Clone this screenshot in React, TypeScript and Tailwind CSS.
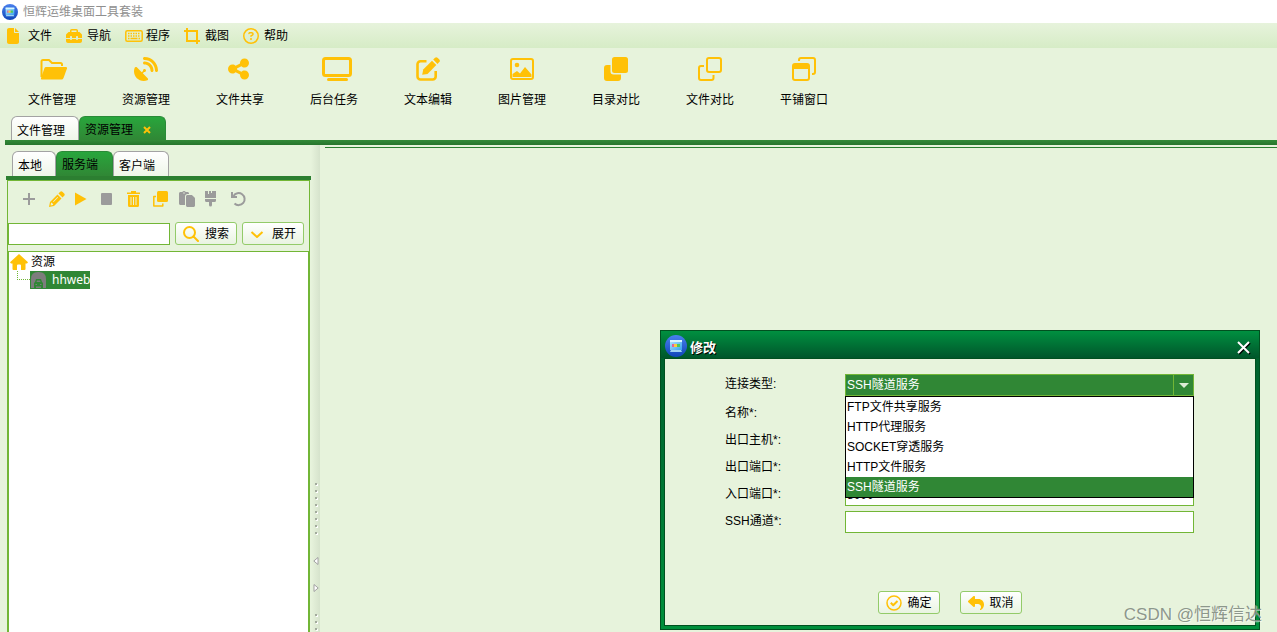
import { useState } from "react";
import type { ReactNode } from "react";
import clsx from "clsx";
import {
	FaFile,
	FaPaste,
	FaPlay,
	FaRegCircleQuestion,
	FaReply,
	FaSatelliteDish,
	FaShareNodes,
	FaToolbox,
} from "react-icons/fa6";

function Logo({ size }: { size: number }) {
	return (
		<svg width={size} height={size} viewBox="0 0 22 22" className="shrink-0">
			<defs>
				<linearGradient id="logo-bg" x1="0" y1="0" x2="0" y2="1">
					<stop offset="0" stopColor="#4a80ee" />
					<stop offset="1" stopColor="#0f45b8" />
				</linearGradient>
				<linearGradient id="logo-screen" x1="0" y1="0" x2="1" y2="1">
					<stop offset="0" stopColor="#b5e8ff" />
					<stop offset="1" stopColor="#3aa2ee" />
				</linearGradient>
			</defs>
			<circle cx="11" cy="11" r="11" fill="url(#logo-bg)" />
			<rect x="5" y="5" width="12" height="10" fill="url(#logo-screen)" />
			<path d="M5 5h12v2H5z" fill="#d8f5ff" />
			<path d="M6 15h10l1 2H5z" fill="#9ed3f5" />
			<path d="M7 9h2v3H7z" fill="#e0649c" />
			<path d="M9 9h3v3H9z" fill="#ffc93c" />
			<path d="M12 9h3v3h-3z" fill="#4fc95a" />
		</svg>
	);
}

function Icon({ w = 24, h = 24, children }: { w?: number; h?: number; children: ReactNode }) {
	return (
		<svg
			width={w}
			height={h}
			viewBox={`0 0 ${w} ${h}`}
			fill="currentColor"
			className="shrink-0"
			aria-hidden="true"
		>
			{children}
		</svg>
	);
}

const line = {
	fill: "none",
	stroke: "currentColor",
	strokeWidth: 2,
	strokeLinejoin: "round",
} as const;

const CropIcon = () => (
	<Icon w={16} h={16}>
		<path {...line} strokeLinejoin="miter" d="M3 0v13h13M0 3h13v13" />
	</Icon>
);

const KeyboardIcon = () => (
	<Icon w={18} h={12}>
		<rect {...line} strokeWidth={1.5} x="0.8" y="0.8" width="16.4" height="10.4" rx="1.5" />
		<path {...line} strokeWidth={1.5} strokeDasharray="1.5 1" d="M3 3.5h12M3 6h12" />
		<path {...line} strokeWidth={1.5} d="M3 8.5h1.5M5.500 8.500h7M13.500 8.500H15" />
	</Icon>
);

const FolderIcon = () => (
	<Icon w={28}>
		<path {...line} d="M1.5 20V4.5Q1.5 3 3 3h6l3 3h8.5Q22 6 22 7.5V9" />
		<path d="M6 10h20q1.500 0 1 1.500l-3.500 9.500q-.6 1.500-2 1.500H2q-1.500 0-1-1.500L4.500 11q.4-1 1.500-1z" />
	</Icon>
);

const DesktopIcon = () => (
	<Icon w={30}>
		<rect {...line} strokeWidth={3} x="1.5" y="1.5" width="27" height="17" rx="2" />
		<rect x="5" y="21" width="21" height="3" rx="1.5" />
	</Icon>
);

const EditIcon = () => (
	<Icon>
		<path {...line} strokeWidth={2.6} d="M10.5 4.3h-6a3 3 0 0 0-3 3v12.2a3 3 0 0 0 3 3h12.200a3 3 0 0 0 3-3V14" />
		<path d="M6.2 17.800l1-5.300L16 3.800l4.300 4.300-8.800 8.800z" />
		<path d="M17.2 2.600L19 .8a1.800 1.800 0 0 1 2.500 0l1.800 1.800a1.800 1.800 0 0 1 0 2.500l-1.800 1.800z" />
	</Icon>
);

const ImageIcon = () => (
	<Icon>
		<rect {...line} x="1" y="2" width="22" height="20" rx="2" />
		<circle cx="7" cy="8" r="2.3" />
		<path d="M2.5 20v-3L7 14l3 2.500L15 10l6.500 7.500V20z" />
	</Icon>
);

const CopyIcon = () => (
	<Icon>
		<rect x="8" y="0" width="16" height="16" rx="2.5" />
		<path d="M0 11a3 3 0 0 1 3-3h3.500v6.500a3 3 0 0 0 3 3H17V21a3 3 0 0 1-3 3H3a3 3 0 0 1-3-3z" />
	</Icon>
);

const CompareIcon = () => (
	<Icon>
		<rect {...line} x="9" y="1" width="14" height="14" rx="2" />
		<path {...line} d="M6 9H3q-2 0-2 2v10q0 2 2 2h10.500q2 0 2-2v-3" />
	</Icon>
);

const WindowsIcon = () => (
	<Icon>
		<rect {...line} x="1" y="7" width="16" height="16" rx="2" />
		<path d="M1 7h16v5H1z" />
		<path {...line} d="M7 4V3q0-2 2-2h12q2 0 2 2v12q0 2-2 2h-1" />
	</Icon>
);

const menus = [
	{ label: "文件", icon: <FaFile size={16} className="-ml-0.5" /> },
	{ label: "导航", icon: <FaToolbox size={16} /> },
	{ label: "程序", icon: <KeyboardIcon /> },
	{ label: "截图", icon: <CropIcon /> },
	{ label: "帮助", icon: <FaRegCircleQuestion size={16} /> },
];

const tools = [
	{ label: "文件管理", icon: <FolderIcon /> },
	{ label: "资源管理", icon: <FaSatelliteDish size={24} /> },
	{ label: "文件共享", icon: <FaShareNodes className="h-6 w-[21px]" /> },
	{ label: "后台任务", icon: <DesktopIcon /> },
	{ label: "文本编辑", icon: <EditIcon /> },
	{ label: "图片管理", icon: <ImageIcon /> },
	{ label: "目录对比", icon: <CopyIcon /> },
	{ label: "文件对比", icon: <CompareIcon /> },
	{ label: "平铺窗口", icon: <WindowsIcon /> },
];

const actions = [
	{
		label: "新增",
		on: false,
		icon: (
			<Icon w={13} h={16}>
				<path d="M5 2h2v5h5v2H7v5H5V9H0V7h5z" />
			</Icon>
		),
	},
	{
		label: "编辑",
		on: true,
		icon: (
			<Icon w={16} h={16}>
				<path
					fillRule="evenodd"
					d="M0 16l1-5 7.500-7.500 4 4L5 15zM2 12l-.4 2.400L4 14l.2-1.300-1-.2-.2-1zM9.500 2.500L11.200.8q1-1 2.200 0l1.800 1.800q1 1 0 2.200L13.500 6.500zM4 10.500l.6.6 4.500-4.500-.6-.6z"
				/>
			</Icon>
		),
	},
	{
		label: "启动",
		on: true,
		icon: (
			<Icon w={12} h={16}>
				<path d="M0 1.500L11.500 8 0 14.500z" />
			</Icon>
		),
	},
	{
		label: "停止",
		on: false,
		icon: (
			<Icon w={12} h={16}>
				<rect y="2" width="11" height="12" rx="1" />
			</Icon>
		),
	},
	{
		label: "删除",
		on: true,
		icon: (
			<Icon w={14} h={16}>
				<path d="M4 0h5v1.500h4V3H0V1.500h4z" />
				<path fillRule="evenodd" d="M1 4h11v10.500q0 1.500-1.500 1.500h-8Q1 16 1 14.500zM3.500 6v8h1V6zM6 6v8h1V6zM8.500 6v8h1V6z" />
			</Icon>
		),
	},
	{
		label: "复制",
		on: true,
		icon: (
			<Icon w={15} h={16}>
				<rect x="4" y="0" width="11" height="11" rx="1.5" />
				<path {...line} strokeWidth={1.5} d="M3 5.500H.8v9.500h9v-2.500" />
			</Icon>
		),
	},
	{ label: "粘贴", on: false, icon: <FaPaste size={16} /> },
	{
		label: "清理",
		on: false,
		icon: (
			<Icon w={11} h={16}>
				<path d="M0 0h3v3h1V0h2v2h1V0h4v7H0zM0 8h11v1.500q0 1.500-1.500 1.500H7v3q0 1.500-1.500 1.500T4 14v-3H1.500Q0 11 0 9.500z" />
			</Icon>
		),
	},
	{
		label: "还原",
		on: false,
		icon: (
			<Icon w={15} h={16}>
				<path {...line} d="M2.500 5A6 6 0 1 1 3.500 12.500" />
				<path {...line} strokeLinejoin="miter" d="M1 1v5h5" />
			</Icon>
		),
	},
];

const services = [
	"FTP文件共享服务",
	"HTTP代理服务",
	"SOCKET穿透服务",
	"HTTP文件服务",
	"SSH隧道服务",
];

const fields = [
	{ id: "name", label: "名称*:", value: "" },
	{ id: "out-host", label: "出口主机*:", value: "" },
	{ id: "out-port", label: "出口端口*:", value: "" },
	{ id: "in-port", label: "入口端口*:", value: "8000" },
	{ id: "ssh-channel", label: "SSH通道*:", value: "" },
];

function Tab({ active, children }: { active?: boolean; children: ReactNode }) {
	return (
		<button
			type="button"
			role="tab"
			aria-selected={!!active}
			className={clsx(
				"flex items-center rounded-t-md border border-b-0 pl-[5px]",
				active
					? "border-[#2a8a38] bg-linear-to-b from-[#27a63c] to-[#308735] pt-0.5"
					: "border-[#a3a3a3] bg-linear-to-b from-white to-[#eef6e8] pt-1",
			)}
		>
			{children}
		</button>
	);
}

function PushButton({ icon, children }: { icon: ReactNode; children: ReactNode }) {
	return (
		<button
			type="button"
			className="flex h-[23px] w-[62px] shrink-0 items-center rounded-[3px] border border-[#93cb69] bg-linear-to-b from-white to-[#e9f4e1] pt-px pl-[7px]"
		>
			<span className="flex w-[22px] text-[#ffc107]">{icon}</span>
			{children}
		</button>
	);
}

function SidePanel() {
	return (
		<aside className="flex w-[306px] shrink-0 flex-col pt-1.5 pl-px">
			<div role="tablist" className="flex h-[25px] pl-1.5">
				<Tab>
					<span className="w-[37px] text-left">本地</span>
				</Tab>
				<Tab active>
					<span className="w-[50px] text-left">服务端</span>
				</Tab>
				<Tab>
					<span className="w-[49px] text-left">客户端</span>
				</Tab>
			</div>
			<div className="h-1 shrink-0 bg-[#2c7f31]" />
			<div className="mr-px ml-px flex flex-1 flex-col border border-b-0 border-[#72b636]">
				<div className="flex h-[38px] shrink-0 items-center pb-0.5 pl-[15px]">
					{actions.map((action) => (
						<button
							key={action.label}
							type="button"
							aria-label={action.label}
							className={clsx("flex w-[26px]", action.on ? "text-[#ffc107]" : "text-[#9b9b9b]")}
						>
							{action.icon}
						</button>
					))}
				</div>
				<div className="flex h-8 shrink-0 items-start gap-[5px] pt-[3px] pr-[5px]">
					<input
						aria-label="搜索资源"
						className="mt-px h-[22px] min-w-0 flex-1 border border-[#72b636] bg-white px-1"
					/>
					<PushButton
						icon={
							<Icon w={16} h={16}>
								<circle {...line} cx="6.5" cy="6.5" r="5.5" />
								<path {...line} strokeLinecap="round" d="M10.500 10.500L15 15" />
							</Icon>
						}
					>
						搜索
					</PushButton>
					<PushButton
						icon={
							<Icon w={14} h={16}>
								<path {...line} d="M1.500 6L7 11l5.500-5" />
							</Icon>
						}
					>
						展开
					</PushButton>
				</div>
				<ul role="tree" className="flex-1 border border-b-0 border-[#72b636] bg-white pt-px">
					<li role="treeitem" aria-expanded="true">
						<div className="flex h-[18px] items-center gap-[3px] pl-px">
							<Icon w={18} h={16}>
								<path
									fill="#ffc107"
									d="M9 0l9 8.300-1 1.200h-1.500V15q0 1-1 1H11v-4.500q0-1-1-1H8q-1 0-1 1V16H3.500q-1 0-1-1V9.500H1L0 8.300z"
								/>
							</Icon>
							资源
						</div>
						<ul role="group" className="pl-2">
							<li role="treeitem" className="flex h-[18px]">
								<span className="mb-[9px] w-[13px] border-b border-l border-dotted border-[#72b636]" />
								<span className="flex items-center gap-1 bg-[#308735] font-['Noto_Sans',sans-serif] text-white">
									<Icon w={18} h={18}>
										<path fill="#7d7d7d" d="M1 17V8q0-7 7-7h1q7 0 7 7v9z" />
										<path
											fill="#308735"
											fillRule="evenodd"
											d="M4 17v-5l1-1 1-3h5l1 3 1 1v5h-2v-1.500H6V17zM6.500 11h4l-.5-1.500H7zM5.500 13v1H7v-1zM10 13v1h1.500v-1z"
										/>
									</Icon>
									hhweb
								</span>
							</li>
						</ul>
					</li>
				</ul>
			</div>
		</aside>
	);
}

function Dots() {
	return (
		<>
			{Array.from({ length: 8 }, (_, i) => (
				<span key={i} className="mb-[5px] size-0.5 shrink-0 bg-[#a3ab9d] shadow-[1px_1px_0_#fff]" />
			))}
		</>
	);
}

function Splitter() {
	return (
		<div className="flex w-[9px] shrink-0 flex-col items-center overflow-hidden bg-linear-to-r from-[#e7f3dc] to-[#d6e3cc] pt-[338px]">
			<Dots />
			<div className="flex shrink-0 flex-col gap-[19px] pt-[18px] pb-[22px]">
				<Icon w={6} h={8}>
					<path d="M5 .5v7L.8 4z" fill="#fff" stroke="#a0a0a0" />
				</Icon>
				<Icon w={6} h={8}>
					<path d="M1 .5v7L5.200 4z" fill="#fff" stroke="#a0a0a0" />
				</Icon>
			</div>
			<Dots />
		</div>
	);
}

function EditDialog() {
	const [service, setService] = useState(services[4]);

	return (
		<div
			role="dialog"
			aria-labelledby="dialog-title"
			className="absolute top-[330px] left-[660px] flex h-[300px] w-[600px] flex-col border border-[#00501f] bg-linear-to-b from-[#005c2c] to-[#008f3c] px-[3px] pb-[3px]"
		>
			<div className="-mx-[3px] flex h-[27px] shrink-0 items-center bg-linear-to-b from-[#009040] to-[#00562b] pt-0.5 pr-2 pl-1 text-white">
				<Logo size={22} />
				<h2
					id="dialog-title"
					className="flex-1 pt-1 pl-[3px] text-[13px] font-bold [text-shadow:1px_1px_0_#000]"
				>
					修改
				</h2>
				<button type="button" aria-label="关闭" className="pt-1">
					<Icon w={15} h={15}>
						<path stroke="#000" strokeWidth="2" d="M3 3l11 11M14 3L3 14" />
						<path stroke="#fff" strokeWidth="2" d="M2 2l11 11M13 2L2 13" />
					</Icon>
				</button>
			</div>
			<form className="flex flex-1 flex-col border border-[#00501f] bg-[#e7f3dc] pt-[15px] pr-[61px] pl-[60px]">
				<div className="flex pb-[7px]">
					<label htmlFor="service" className="w-[120px] leading-5">
						连接类型:
					</label>
					<div className="relative flex-1">
						<select
							id="service"
							value={service}
							onChange={(e) => setService(e.target.value)}
							className="block h-[22px] w-full appearance-none border border-[#72b636] bg-[#308735] pl-px text-white"
						>
							{services.map((name) => (
								<option key={name}>{name}</option>
							))}
						</select>
						<span className="pointer-events-none absolute inset-y-0 right-0 flex w-[21px] items-center justify-center border border-[#72b636] text-[#dcecd4]">
							<Icon w={10} h={5}>
								<path d="M0 0h10L5 5z" />
							</Icon>
						</span>
						<ul role="listbox" className="absolute top-full right-0 left-0 z-10 border border-black bg-white">
							{services.map((name) => (
								<li
									key={name}
									role="option"
									aria-selected={name === service}
									onClick={() => setService(name)}
									className={clsx("h-5 pl-px leading-5", name === service && "bg-[#308735] text-white")}
								>
									{name}
								</li>
							))}
						</ul>
					</div>
				</div>
				<div className="flex flex-col gap-[5px]">
					{fields.map((field) => (
						<div key={field.id} className="flex">
							<label htmlFor={field.id} className="w-[120px] leading-5">
								{field.label}
							</label>
							<input
								id={field.id}
								defaultValue={field.value}
								className="h-[22px] min-w-0 flex-1 border border-[#72b636] bg-white pl-px"
							/>
						</div>
					))}
				</div>
				<div className="mt-auto flex justify-center gap-5 pr-5 pb-[11px]">
					<PushButton
						icon={
							<Icon w={16} h={16}>
								<circle {...line} strokeWidth={1.5} cx="8" cy="8" r="7" />
								<path {...line} d="M4.800 7.800l2.400 2.400 4.300-4.200" />
							</Icon>
						}
					>
						确定
					</PushButton>
					<PushButton icon={<FaReply size={16} />}>取消</PushButton>
				</div>
			</form>
		</div>
	);
}

export default function App() {
	return (
		<div className="relative flex h-screen flex-col overflow-hidden bg-[#e7f3dc] font-['Liberation_Sans','Noto_Sans_CJK_SC',sans-serif] text-[12px] leading-4 text-black">
			<header className="flex h-[23px] shrink-0 items-center gap-[5px] bg-white pl-0.5 text-[#8f8f8f]">
				<Logo size={16} />
				<h1>恒辉运维桌面工具套装</h1>
			</header>
			<nav className="flex h-[25px] shrink-0 items-center gap-3.5 bg-linear-to-b from-[#e7f3dc] to-[#d6ecc6] pl-[7px]">
				{menus.map((menu) => (
					<button key={menu.label} type="button" className="flex items-center gap-[3px]">
						<span className="flex w-[18px] text-[#ffc107]">{menu.icon}</span>
						{menu.label}
					</button>
				))}
			</nav>
			<div role="toolbar" className="flex h-[68px] shrink-0 items-start pt-[9px] pl-[5px]">
				{tools.map((tool) => (
					<button key={tool.label} type="button" className="flex w-[94px] flex-col items-center gap-[11px]">
						<span className="flex w-6 text-[#ffc107]">{tool.icon}</span>
						{tool.label}
					</button>
				))}
			</div>
			<div role="tablist" className="flex h-6 shrink-0 pl-[11px]">
				<Tab>
					<span className="w-[61px] text-left">文件管理</span>
				</Tab>
				<Tab active>
					<span className="flex w-[80px] items-center gap-2.5">
						资源管理
						<Icon w={8} h={8}>
							<path stroke="#ffc107" strokeWidth="2" d="M1 1l6 6M7 1L1 7" />
						</Icon>
					</span>
				</Tab>
			</div>
			<div className="ml-[5px] h-[5px] shrink-0 bg-linear-to-b from-[#338a38] to-[#27752d]" />
			<div className="flex min-h-0 flex-1 pl-[5px]">
				<SidePanel />
				<Splitter />
				<main className="flex-1 pt-0.5 pl-[5px]">
					<div className="h-px bg-[#2c7f31]" />
				</main>
			</div>
			<EditDialog />
			<p className="absolute right-[15px] bottom-[7px] text-[17px] leading-5 whitespace-nowrap text-[#808a80]/90 [text-shadow:1px_1px_0_#ffffff80]">
				CSDN @恒辉信达
			</p>
		</div>
	);
}
